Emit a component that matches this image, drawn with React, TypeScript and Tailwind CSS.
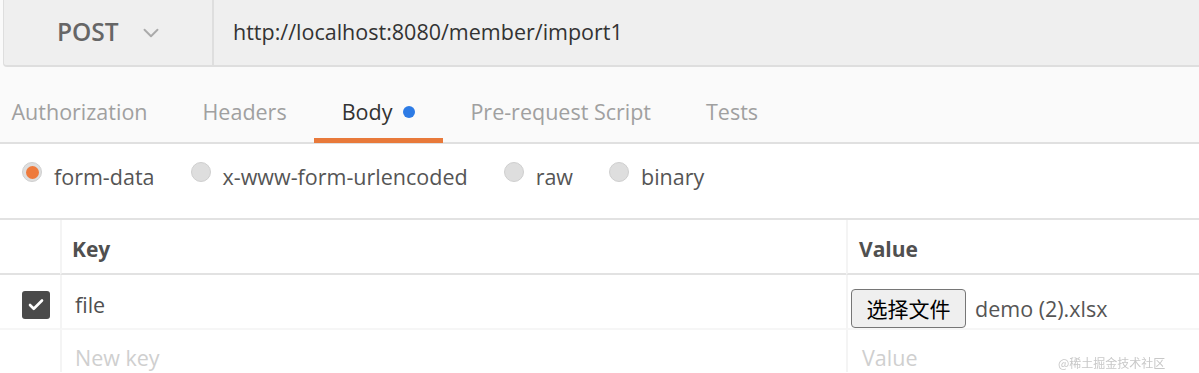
import { ChevronDown, Check } from 'lucide-react';

const TABS = [
  { label: 'Authorization', active: false },
  { label: 'Headers', active: false },
  { label: 'Body', active: true, dot: true },
  { label: 'Pre-request Script', active: false },
  { label: 'Tests', active: false },
];

const MODES = [
  { label: 'form-data', checked: true },
  { label: 'x-www-form-urlencoded', checked: false },
  { label: 'raw', checked: false },
  { label: 'binary', checked: false },
];

function Radio({ checked }: { checked: boolean }) {
  return (
    <span className="w-[20px] h-[20px] rounded-full bg-[#dedede] border border-[#cfcfcf] flex items-center justify-center -translate-y-[5px] shrink-0">
      {checked && <span className="w-[13px] h-[13px] rounded-full bg-[#ee7a3c]" />}
    </span>
  );
}

export default function App() {
  return (
    <div className="relative w-[1199px] h-[373px] overflow-hidden bg-white font-['Open_Sans','Noto_Sans_CJK_SC',sans-serif]">

      {/* ── Request bar ── */}
      <div className="pl-[3px] bg-[#fafafa]">
        <div className="flex h-[67px] bg-[#efefef] border-l border-b-2 border-[#dedede] rounded-bl-[4px]">
          <div className="w-[210px] flex items-center pl-[53px] gap-[19px] border-r-2 border-[#dedede]">
            <span className="text-[24.5px] font-semibold text-[#666]">POST</span>
            <ChevronDown className="w-[26px] h-[26px] text-[#aaa]" strokeWidth={1.75} />
          </div>
          <div className="flex items-center pl-[19px] text-[21.5px] text-[#333]">
            http://localhost:8080/member/import1
          </div>
        </div>
      </div>

      {/* ── Tabs ── */}
      <div className="flex h-[77px] bg-[#fafafa] border-b-2 border-[#e0e0e0] -ml-[16px]">
        {TABS.map((t) => (
          <div
            key={t.label}
            className={`relative flex items-center px-[27.5px] pt-[15px] text-[21.5px] ${t.active ? 'text-[#333]' : 'text-[#a0a0a0]'}`}
          >
            {t.label}
            {t.dot && <span className="ml-[11px] w-[12px] h-[12px] rounded-full bg-[#2d7be5]" />}
            {t.active && <span className="absolute left-0 right-0 -bottom-[1px] h-[5px] bg-[#e8793a]" />}
          </div>
        ))}
      </div>

      {/* ── Body modes ── */}
      <div className="flex items-center h-[76px] pl-[22px] gap-[36px] border-b-2 border-[#e2e2e2]">
        {MODES.map((m) => (
          <label key={m.label} className="flex items-center gap-[12px] text-[21.5px] text-[#555] -mt-[8px]">
            <Radio checked={m.checked} />
            {m.label}
          </label>
        ))}
      </div>

      {/* ── Table ── */}
      <div className="grid grid-cols-[60px_786px_1fr]">
        {/* header */}
        <div className="h-[55px] border-b-2 border-[#e2e2e2]" />
        <div className="h-[55px] border-b-2 border-l-2 border-[#e2e2e2] border-l-[#f4f4f4] flex items-center pl-[10px] pt-[6px] text-[21px] font-bold text-[#505050]">
          Key
        </div>
        <div className="h-[55px] border-b-2 border-l-2 border-[#e2e2e2] border-l-[#f4f4f4] flex items-center pl-[11px] pt-[6px] text-[21px] font-bold text-[#505050]">
          Value
        </div>

        {/* row 1 */}
        <div className="h-[55px] border-b-2 border-[#f6f6f6] flex items-center justify-end pr-[10px] pt-[6px]">
          <span className="w-[28px] h-[28px] rounded-[3px] bg-[#4a4a4a] flex items-center justify-center">
            <Check className="w-[18px] h-[18px] text-white" strokeWidth={3.5} />
          </span>
        </div>
        <div className="h-[55px] border-b-2 border-l-2 border-[#f6f6f6] border-l-[#f4f4f4] flex items-center pl-[13px] pt-[8px] text-[21.5px] text-[#505050]">
          file
        </div>
        <div className="h-[55px] border-b-2 border-l-2 border-[#f6f6f6] border-l-[#f4f4f4] flex items-center pl-[3px] pt-[14px] gap-[9px]">
          <button className="h-[39px] w-[115px] rounded-[4px] border border-[#767676] bg-[#efefef] text-[21px] text-black font-['Noto_Sans_CJK_SC',sans-serif]">
            选择文件
          </button>
          <span className="text-[21.5px] text-[#555] pt-[2px]">demo (2).xlsx</span>
        </div>

        {/* row 2 */}
        <div className="h-[42px]" />
        <div className="h-[42px] border-l-2 border-[#f4f4f4] flex items-center pl-[13px] pt-[14px] text-[21.5px] text-[#cfcfcf]">
          New key
        </div>
        <div className="h-[42px] border-l-2 border-[#f4f4f4] flex items-center pl-[14px] pt-[14px] text-[21.5px] text-[#cfcfcf]">
          Value
        </div>
      </div>

      {/* watermark */}
      <span className="absolute left-[1058px] top-[355px] text-[12px] leading-[16px] text-[#c8c8c8] blur-[0.5px] font-['Noto_Sans_CJK_SC',sans-serif]">
        @稀土掘金技术社区
      </span>
    </div>
  );
}
